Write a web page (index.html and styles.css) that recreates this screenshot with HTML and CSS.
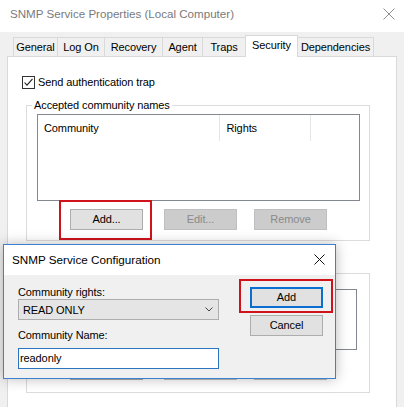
FILE: index.html
```html
<!DOCTYPE html>
<html>
<head>
<meta charset="utf-8">
<link rel="stylesheet" href="styles.css">
</head>
<body>
<div class="window">
  <div class="titlebar">
    <span class="title">SNMP Service Properties (Local Computer)</span>
    <svg class="close main-close" width="12" height="12" viewBox="0 0 12 12"><path d="M0.5 0.5L11.5 11.5M11.5 0.5L0.5 11.5" stroke="#8c8c8c" stroke-width="1" fill="none"/></svg>
  </div>
  <div class="tabs">
    <div class="tab t-general">General</div>
    <div class="tab t-logon">Log On</div>
    <div class="tab t-recovery">Recovery</div>
    <div class="tab t-agent">Agent</div>
    <div class="tab t-traps">Traps</div>
    <div class="tab t-security selected">Security</div>
    <div class="tab t-deps">Dependencies</div>
  </div>
  <div class="panel">
    <div class="check-row">
      <span class="checkbox"><svg width="11" height="11" viewBox="0 0 11 11"><path d="M1.5 5.5L4 8.2L9.5 1.8" stroke="#222" stroke-width="1.1" fill="none"/></svg></span>
      <span class="check-label">Send authentication trap</span>
    </div>
    <div class="group group-1">
      <div class="legend">Accepted community names</div>
      <div class="listview">
        <div class="lv-header">
          <div class="col col-community">Community</div>
          <div class="col col-rights">Rights</div>
          <div class="col col-rest"></div>
        </div>
      </div>
      <div class="btn-row">
        <div class="btn-wrap">
          <div class="btn btn-add">Add...</div>
          <span class="highlight hl-main"></span>
        </div>
        <div class="btn disabled btn-edit">Edit...</div>
        <div class="btn disabled btn-remove">Remove</div>
      </div>
    </div>
    <div class="group group-2">
      <div class="listbox"></div>
      <div class="btn-row row-2">
        <div class="btn btn-add"></div>
        <div class="btn disabled btn-edit"></div>
        <div class="btn disabled btn-remove"></div>
      </div>
    </div>
  </div>

  <div class="dialog">
    <div class="dlg-titlebar">
      <span class="dlg-title">SNMP Service Configuration</span>
      <svg class="close dlg-close" width="11" height="11" viewBox="0 0 11 11"><path d="M0.5 0.5L10.5 10.5M10.5 0.5L0.5 10.5" stroke="#111" stroke-width="1" fill="none"/></svg>
    </div>
    <div class="dlg-body">
      <div class="dlg-left">
        <div class="field-label">Community rights:</div>
        <div class="combo">
          <span>READ ONLY</span>
          <svg width="8" height="5" viewBox="0 0 8 5"><path d="M0.5 0.5L4 4L7.5 0.5" stroke="#444" stroke-width="1" fill="none"/></svg>
        </div>
        <div class="field-label label-2">Community Name:</div>
        <div class="textbox">readonly</div>
      </div>
      <div class="dlg-right">
        <div class="btn-wrap">
          <div class="btn default-btn">Add</div>
          <span class="highlight hl-dlg"></span>
        </div>
        <div class="btn cancel-btn">Cancel</div>
      </div>
    </div>
  </div>
</div>
</body>
</html>
```

FILE: styles.css
```css
* { box-sizing: border-box; }
html, body { margin: 0; padding: 0; }
body {
  font-family: "Liberation Sans", Arial, sans-serif;
  font-size: 11px;
  letter-spacing: -0.1px;
  color: #000;
  background: #f0f0f0;
}
.window {
  position: relative;
  width: 404px;
  height: 407px;
  overflow: hidden;
  background: #f0f0f0;
}
.titlebar {
  height: 32px;
  background: #fff;
  display: flex;
  justify-content: space-between;
  align-items: flex-start;
  padding: 6px 10px 0 10px;
}
.title {
  font-size: 11.6px;
  letter-spacing: 0;
  line-height: 16px;
  color: #7a7a7a;
}
.main-close { margin-top: 2px; margin-right: -1px; }

.tabs {
  display: flex;
  align-items: flex-end;
  height: 19px;
  margin-top: 5px;
  padding-left: 13px;
  position: relative;
  z-index: 1;
}
.tab {
  height: 19px;
  border-top: 1px solid #d9d9d9;
  border-left: 1px solid #d9d9d9;
  background: #f0f0f0;
  text-align: center;
  line-height: 18px;
  white-space: nowrap;
}
.t-general { width: 44px; }
.t-logon { width: 47px; }
.t-recovery { width: 58px; }
.t-agent { width: 40px; }
.t-traps { width: 43px; }
.t-security {
  width: 53px;
  height: 22px;
  margin-bottom: -1px;
  background: #fff;
  border-right: 1px solid #d9d9d9;
  line-height: 18px;
}
.t-deps { width: 76px; border-left: none; border-right: 1px solid #d9d9d9; }

.panel {
  margin-left: 7px;
  width: 390px;
  height: 360px;
  background: #fff;
  border: 1px solid #d9d9d9;
  overflow: hidden;
}
.check-row {
  display: flex;
  align-items: center;
  height: 13px;
  margin: 19px 0 0 14px;
}
.checkbox {
  width: 13px;
  height: 13px;
  border: 1px solid #333;
  background: #fff;
  display: flex;
  align-items: center;
  justify-content: center;
}
.check-label { margin-left: 3px; line-height: 13px; }

.group {
  margin-left: 18px;
  width: 344px;
  border: 1px solid #dcdcdc;
}
.group-1 { margin-top: 16px; padding-bottom: 10px; }
.legend {
  width: fit-content;
  height: 15px;
  line-height: 15px;
  margin: -8px 0 0 5px;
  padding: 0 2px;
  background: #fff;
  white-space: nowrap;
}
.listview {
  margin: 1px 0 0 10px;
  width: 323px;
  height: 87px;
  border: 1px solid #828790;
  background: #fff;
}
.lv-header { display: flex; height: 26px; }
.col {
  height: 26px;
  line-height: 26px;
  padding-left: 6px;
  border-right: 1px solid #e5e5e5;
}
.col-community { width: 183px; }
.col-rights { width: 91px; }
.col-rest { width: 48px; border-right: none; }

.btn-row { display: flex; margin: 8px 0 0 43px; }
.btn-wrap { position: relative; }
.btn {
  width: 73px;
  height: 21px;
  background: #e1e1e1;
  border: 1px solid #adadad;
  text-align: center;
  line-height: 19px;
  white-space: nowrap;
}
.btn.disabled {
  background: #cccccc;
  border-color: #bfbfbf;
  color: #8a8a8a;
}
.btn-edit { margin-left: 21px; }
.btn-remove { margin-left: 17px; }

.highlight {
  position: absolute;
  border: 2px solid #d0121b;
  pointer-events: none;
}
.hl-main { left: -11px; right: -9px; top: -9px; bottom: -10px; }
.hl-dlg { left: -11px; right: -10px; top: -8px; bottom: -5px; }

.group-2 { margin-top: 32px; height: 120px; padding-top: 15px; }
.listbox {
  margin-left: 10px;
  width: 320px;
  height: 61px;
  border: 1px solid #828790;
  background: #fff;
}
.row-2 { margin-top: 9px; }

.dialog {
  position: absolute;
  left: 3px;
  top: 244px;
  width: 333px;
  height: 135px;
  border: 1px solid #3a82cf;
  background: #f0f0f0;
  box-shadow: 0 0 12px rgba(0, 0, 0, 0.28);
  z-index: 5;
}
.dlg-titlebar {
  height: 30px;
  background: #fff;
  display: flex;
  justify-content: space-between;
  align-items: flex-start;
  padding: 7px 10px 0 8px;
}
.dlg-title { font-size: 11.7px; letter-spacing: 0; line-height: 16px; }
.dlg-close { margin-top: 2px; }

.dlg-body { display: flex; padding-left: 14px; }
.dlg-left { width: 201px; padding-top: 10px; }
.field-label { line-height: 14px; height: 14px; }
.label-2 { margin-top: 8px; }
.combo {
  height: 21px;
  background: #e5e5e5;
  border: 1px solid #adadad;
  display: flex;
  align-items: center;
  justify-content: space-between;
  padding: 0 5px 0 4px;
}
.textbox {
  margin-top: 6px;
  height: 21px;
  background: #fff;
  border: 1px solid #2a74c0;
  line-height: 19px;
  padding-left: 1px;
}
.dlg-right { margin-left: 31px; padding-top: 12px; }
.default-btn { border: 2px solid #0a6fd0; line-height: 17px; }
.cancel-btn { margin-top: 7px; }
```
